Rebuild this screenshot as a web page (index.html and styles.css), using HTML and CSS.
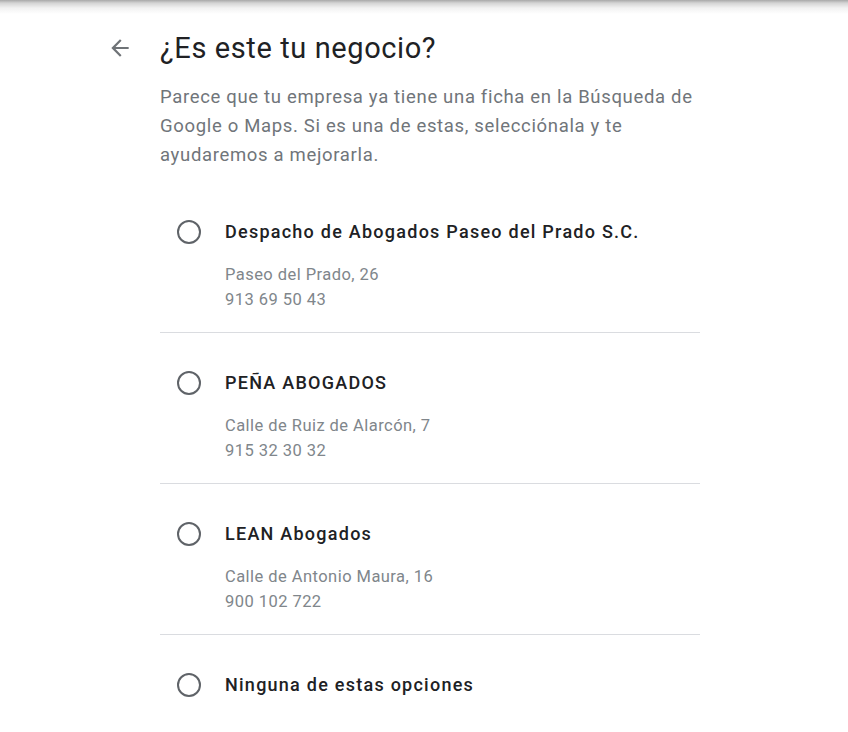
FILE: index.html
```html
<!DOCTYPE html>
<html lang="es">
<head>
<meta charset="utf-8">
<title>¿Es este tu negocio?</title>
<link rel="stylesheet" href="styles.css">
</head>
<body>
<div class="topshade"></div>
<main class="page">
  <div class="back">
    <svg width="26" height="26" viewBox="0 0 24 24" aria-hidden="true"><path d="M20 11H7.83l5.59-5.59L12 4l-8 8 8 8 1.41-1.41L7.83 13H20v-2z" fill="#6f7377"/></svg>
  </div>
  <div class="content">
    <h1 class="title">¿Es este tu negocio?</h1>
    <p class="desc">Parece que tu empresa ya tiene una ficha en la Búsqueda de Google o Maps. Si es una de estas, selecciónala y te ayudaremos a mejorarla.</p>
    <ul class="options">
      <li class="option">
        <div class="row"><span class="radio"></span><span class="name">Despacho de Abogados Paseo del Prado S.C.</span></div>
        <div class="details">Paseo del Prado, 26<br>913 69 50 43</div>
      </li>
      <li class="option">
        <div class="row"><span class="radio"></span><span class="name">PEÑA ABOGADOS</span></div>
        <div class="details">Calle de Ruiz de Alarcón, 7<br>915 32 30 32</div>
      </li>
      <li class="option">
        <div class="row"><span class="radio"></span><span class="name">LEAN Abogados</span></div>
        <div class="details">Calle de Antonio Maura, 16<br>900 102 722</div>
      </li>
      <li class="option last">
        <div class="row"><span class="radio"></span><span class="name">Ninguna de estas opciones</span></div>
      </li>
    </ul>
  </div>
</main>
</body>
</html>
```
FILE: styles.css
```css
* { box-sizing: border-box; }
html, body { margin: 0; padding: 0; background: #fff; }
body { font-family: Roboto, "Noto Sans", Arial, sans-serif; color: #202124; height: 732px; overflow: hidden; }

.topshade {
  height: 14px;
  background: linear-gradient(to bottom, #a8a8a8 0px, #d4d4d4 3px, #f2f2f2 8px, #ffffff 14px);
  margin-bottom: -14px;
}

.page {
  display: grid;
  grid-template-columns: 160px 540px;
  padding-top: 30px;
}

.back {
  justify-self: end;
  margin-right: 27px;
  height: 36px;
  display: flex;
  align-items: center;
}
.back svg { display: block; }

.content { display: flex; flex-direction: column; }

.title {
  margin: 0;
  font-size: 29px;
  line-height: 36px;
  font-weight: 400;
  color: #202124;
  letter-spacing: 0.6px;
}

.desc {
  margin: 16.5px 0 12.5px;
  font-size: 18.5px;
  line-height: 29px;
  letter-spacing: 0.67px;
  color: #70757a;
}

.options { list-style: none; margin: 0; padding: 0; }
.option {
  padding: 38px 0 20.5px;
  border-bottom: 1px solid #dadce0;
}
.option.last { border-bottom: none; }

.row { display: flex; align-items: center; height: 24px; }
.radio {
  width: 24px; height: 24px;
  margin-left: 17px; margin-right: 24px;
  border: 2.5px solid #5f6368;
  border-radius: 50%;
  flex: none;
}
.name {
  font-size: 18px;
  line-height: 24px;
  font-weight: 500;
  letter-spacing: 1.25px;
  color: #202124;
}
.details {
  margin-top: 17.5px;
  padding-left: 65px;
  font-size: 16.5px;
  line-height: 25px;
  letter-spacing: 0.45px;
  color: #80868b;
}
```
